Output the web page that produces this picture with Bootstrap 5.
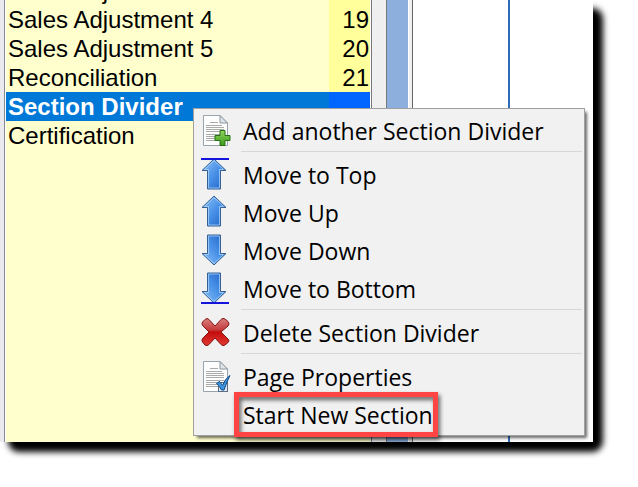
<!DOCTYPE html>
<html lang="en">
<head>
<meta charset="utf-8">
<meta name="viewport" content="width=device-width, initial-scale=1">
<title>Section Divider</title>
<link href="https://cdn.jsdelivr.net/npm/bootstrap@5.3.0/dist/css/bootstrap.min.css" rel="stylesheet">
<style>
body { background: #fff; color: #000; padding: 0 45px 45px 0; }
.window-wrap { z-index: 0; }
.window-wrap::before { content: ""; position: absolute; inset: 0; z-index: -1; border-radius: 10px; box-shadow: 9px 9px 6px 1px #000; }
.window { font-family: "Liberation Sans", Arial, sans-serif; background: #fff; }
.edge { width: 5px; background: #e9e9ee; border-right: 1px solid #8a8a92; }
.page-list { width: 366px; background: #ffffce; border: solid #fff; border-width: 0 1px; }
.page-table { margin-top: -24px; font-size: 24px; line-height: 29px; table-layout: fixed; border-collapse: collapse; }
.page-table td { padding: 0 2px; height: 29px; }
.page-table .num { width: 41px; background: #ffff9c; text-align: right; padding-right: 1px; }
.page-table .picked { background: #0078d7; color: #fff; font-weight: bold; }
.page-table .picked .num { background: #0066ff; }
.gutter { width: 16px; background: #efefef; border: solid #77777c; border-width: 0 1px; }
.splitter { width: 21px; background: #8cafde; }
.splitter-edge { width: 5px; background: #f0f0f0; border-left: 1px solid #fff; border-right: 1px solid #666; }
.margin-line { width: 97px; border-right: 2px solid #2f6cb8; }
.context-menu { left: 193px; right: 8px; top: 108px; background: #f1f1f1; border: 1px solid #a0a0a0; padding: 4px 2px 0; box-shadow: 3px 3px 3px -1px #0009; font: 23px/36px "Open Sans", "Noto Sans", sans-serif; }
.entry { height: 38px; padding: 0 0 0 3px; border: 0; background: none; color: #000; }
.entry .glyph { width: 34px; height: 38px; margin-right: 10px; flex: none; overflow: visible; }
.rule { margin: 0 0 5px 45px; border-top: 1px solid #d7d7d7; opacity: 1; }
.callout { position: relative; }
.callout::after { content: ""; position: absolute; inset: -5px -5px -2px -9px; border: 5px solid #ff4444; filter: drop-shadow(2px 3px 2px #0009); }
</style>
<script src="https://cdn.jsdelivr.net/npm/bootstrap@5.3.0/dist/js/bootstrap.bundle.min.js"></script>
</head>
<body class="vh-100">
<svg width="0" height="0" class="position-absolute" aria-hidden="true">
  <defs>
    <linearGradient id="blue" x1="0" x2="1" y1="0" y2="1"><stop offset="0" stop-color="#8fc2f7"/><stop offset=".5" stop-color="#4a92e8"/><stop offset="1" stop-color="#1f60c4"/></linearGradient>
    <linearGradient id="red" x1="0" x2="0" y1="0" y2="1"><stop offset="0" stop-color="#d98080"/><stop offset=".42" stop-color="#c53b3b"/><stop offset=".5" stop-color="#c40c0c"/><stop offset="1" stop-color="#e23a33"/></linearGradient>
    <linearGradient id="green" x1="0" x2="0" y1="0" y2="1"><stop offset="0" stop-color="#8fd45c"/><stop offset="1" stop-color="#3c9a1c"/></linearGradient>
    <symbol id="arrow" viewBox="0 0 26 32">
      <path d="M13 1 25 12.500H19.500V31H6.500V12.500H1Z" fill="url(#blue)" stroke="#35608f"/>
      <path d="M13 2.500 22.500 11.500H18.500V30H7.500V11.500H3.500Z" fill="none" stroke="#b5dcff" stroke-opacity=".7"/>
    </symbol>
    <symbol id="sheet" viewBox="0 0 26 32">
      <path d="M1 .5H17L24.500 8V30.500H.5V.5Z" fill="#fdfdfd" stroke="#99a3ad"/>
      <path d="M17 .5V8H24.500Z" fill="#dfe4e8" stroke="#8d979f"/>
      <path d="M7 7.500H15M3 10.500H19M3 12.500H21M3 14.500H21M3 16.500H21M3 19.500H21M3 21.500H17M3 23.500H15M3 25.500H15" stroke="#aaa"/>
    </symbol>
  </defs>
</svg>
<main class="window-wrap position-relative h-100">
  <div class="window d-flex h-100 overflow-hidden">
    <div class="edge flex-shrink-0"></div>
    <div class="page-list flex-shrink-0 overflow-hidden">
      <table class="page-table w-100">
        <tbody>
          <tr><td>Sales Adjustment 3</td><td class="num"></td></tr>
          <tr><td>Sales Adjustment 4</td><td class="num">19</td></tr>
          <tr><td>Sales Adjustment 5</td><td class="num">20</td></tr>
          <tr><td>Reconciliation</td><td class="num">21</td></tr>
          <tr class="picked"><td>Section Divider</td><td class="num"></td></tr>
          <tr><td colspan="2">Certification</td></tr>
        </tbody>
      </table>
    </div>
    <div class="gutter flex-shrink-0"></div>
    <div class="splitter flex-shrink-0"></div>
    <div class="splitter-edge flex-shrink-0"></div>
    <div class="margin-line flex-shrink-0"></div>
    <div class="flex-grow-1"></div>
  </div>
  <div class="context-menu position-absolute" role="menu">
    <button class="entry d-flex w-100 text-start" role="menuitem">
      <svg class="glyph" viewBox="0 0 34 38" aria-hidden="true"><use href="#sheet" x="4" y="2" width="26" height="32"/><path d="M21 17.500H26V22.500H31V27.500H26V32.500H21V27.500H16V22.500H21Z" fill="url(#green)" stroke="#247012"/></svg>
      <span>Add another Section Divider</span></button>
    <hr class="rule">
    <button class="entry d-flex w-100 text-start" role="menuitem">
      <svg class="glyph" viewBox="0 0 34 38" aria-hidden="true"><use href="#arrow" x="2" y="1" width="26" height="32"/><path d="M2 2H30" stroke="#1414dc" stroke-width="2"/></svg>
      <span>Move to Top</span></button>
    <button class="entry d-flex w-100 text-start" role="menuitem">
      <svg class="glyph" viewBox="0 0 34 38" aria-hidden="true"><use href="#arrow" x="2" y="0" width="26" height="32"/></svg>
      <span>Move Up</span></button>
    <button class="entry d-flex w-100 text-start" role="menuitem">
      <svg class="glyph" viewBox="0 0 34 38" aria-hidden="true"><use href="#arrow" x="2" y="-33" width="26" height="32" transform="scale(1 -1)"/></svg>
      <span>Move Down</span></button>
    <button class="entry d-flex w-100 text-start" role="menuitem">
      <svg class="glyph" viewBox="0 0 34 38" aria-hidden="true"><use href="#arrow" x="2" y="-33" width="26" height="32" transform="scale(1 -1)"/><path d="M2 32H30" stroke="#1414dc" stroke-width="2"/></svg>
      <span>Move to Bottom</span></button>
    <hr class="rule">
    <button class="entry d-flex w-100 text-start" role="menuitem">
      <svg class="glyph" viewBox="0 0 34 38" aria-hidden="true"><path d="M6 4.500Q8 2.500 10 4.500L16 11 22 4.500Q24 2.500 26 4L29 6.500Q31 9 29 11L22 17 29 24Q31 26 29 27.500L26 30Q24 31.500 22 29.500L16 23 10 29.500Q8 31.500 6 30L3.500 27Q2 25 4 23L10 17 4 11Q2 9 3.500 7Z" fill="url(#red)" stroke="#851616"/></svg>
      <span>Delete Section Divider</span></button>
    <hr class="rule">
    <button class="entry d-flex w-100 text-start" role="menuitem">
      <svg class="glyph" viewBox="0 0 34 38" aria-hidden="true"><use href="#sheet" x="4" y="2" width="26" height="32"/><rect x="19.500" y="23.500" width="9" height="9" fill="#dfe8f0" stroke="#5a6f85"/><path d="M17.500 24.500 20.500 22.500 23.500 26.500Q26 19.500 31 16.500Q28 22 25 31H22.500Q20.500 27 17.500 24.500Z" fill="#3f94de" stroke="#134b86"/></svg>
      <span>Page Properties</span></button>
    <button class="entry d-flex w-100 text-start" role="menuitem">
      <svg class="glyph" viewBox="0 0 34 38" aria-hidden="true"></svg>
      <span class="callout">Start New Section</span></button>
  </div>
</main>
</body>
</html>
